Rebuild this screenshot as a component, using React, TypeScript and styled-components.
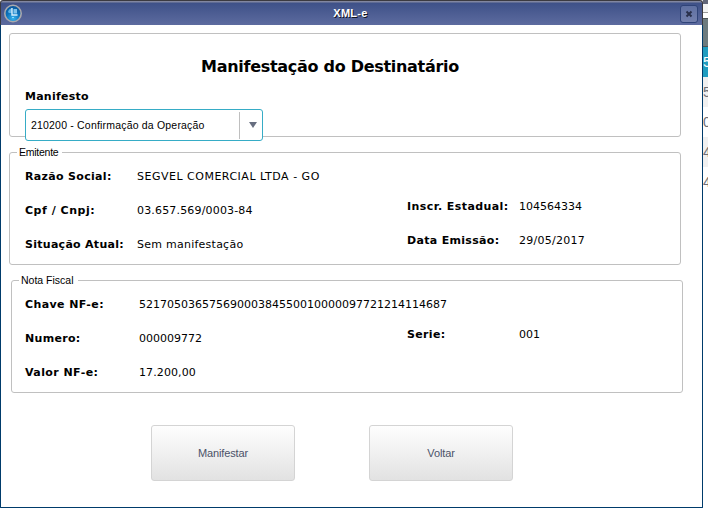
import React from "react";
import styled, { createGlobalStyle } from "styled-components";

const Global = createGlobalStyle`
  *, *::before, *::after { box-sizing: border-box; }
  html, body { margin: 0; padding: 0; background: #fff; overflow: hidden; }
`;

const Desktop = styled.div`
  display: flex;
  width: 708px;
  height: 511px;
  overflow: hidden;
  background: #fff;
  font-family: "DejaVu Sans", Verdana, sans-serif;
  font-size: 11px;
  color: #000;
`;

const Dialog = styled.main`
  width: 703px;
  height: 508px;
  flex: none;
  display: flex;
  flex-direction: column;
  border-radius: 3px 3px 1px 1px;
`;

const TitleBar = styled.header`
  height: 25px;
  flex: none;
  display: grid;
  grid-template-columns: 24px 1fr 24px;
  align-items: center;
  padding: 0 4px 0 2px;
  border: 1px solid #3b3a40;
  border-bottom: 0;
  border-radius: 3px 3px 0 0;
  background: linear-gradient(#8186a0 0 1px, #3e5188 2px, #5d6b9f 100%);
`;

const Caption = styled.h1`
  margin: 0;
  font: bold 11px/14px "Liberation Sans", Arial, sans-serif;
  letter-spacing: 0.3px;
  text-align: center;
  color: #fff;
  text-shadow: 1px 1px 0 #10131f;
`;

const CloseButton = styled.button`
  width: 18px;
  height: 18px;
  margin: 1px 0 0 6px;
  padding: 0;
  display: grid;
  place-items: center;
  border: 1px solid #2f4378;
  border-radius: 3px;
  background: linear-gradient(#5f70a2, #7380ad);
`;

const Content = styled.div`
  flex: 1;
  padding: 8px 0 0 8px;
  border: 1px solid #003b6b;
  border-top: 0;
  border-radius: 0 0 1px 1px;
  background: #fff;
`;

const Panel = styled.section<{ $gap?: number; $indent?: number; $height: number }>`
  position: relative;
  width: 672px;
  height: ${(p) => p.$height}px;
  margin: ${(p) => p.$gap ?? 0}px 0 0 ${(p) => p.$indent ?? 0}px;
  border: 1px solid #c0c0c0;
  border-radius: 3px;
`;

const Legend = styled.h3<{ $spacing: number }>`
  position: absolute;
  left: 7px;
  top: -8px;
  margin: 0;
  padding: 0 4px 0 2px;
  background: #fff;
  font: 10.5px/14px "Liberation Sans", Arial, sans-serif;
  letter-spacing: ${(p) => p.$spacing}px;
`;

const Heading = styled.h2`
  margin: 0;
  padding: 22px 0 0 0;
  text-align: center;
  font-size: 16px;
  line-height: 22px;
  letter-spacing: -0.29px;
  white-space: nowrap;
  transform: translateX(-15px);
`;

const FieldLabel = styled.label`
  display: block;
  padding: 12px 0 0 15px;
  font-weight: bold;
  line-height: 14px;
  letter-spacing: 0.25px;
`;

const Select = styled.div`
  width: 238px;
  height: 32px;
  margin: 5px 0 0 15px;
  display: flex;
  align-items: center;
  border: 1px solid #36acc6;
  border-radius: 3px;
  background: #fff;
  font: 10.5px/14px "Liberation Sans", Arial, sans-serif;
`;

const SelectValue = styled.span`
  flex: 1;
  padding-left: 5px;
  letter-spacing: 0.19px;
  white-space: nowrap;
`;

const SelectArrow = styled.span`
  width: 23px;
  height: 27px;
  padding-left: 3px;
  display: grid;
  place-items: center;
  border-left: 1px solid #bfbfbf;
`;

const Columns = styled.div`
  display: flex;
  padding-top: 17px;
`;

const Column = styled.dl<{ $left: number; $width: number; $drop?: number }>`
  width: ${(p) => p.$width}px;
  margin: 0;
  padding: ${(p) => p.$drop ?? 0}px 0 0 ${(p) => p.$left}px;
  white-space: nowrap;
`;

const Row = styled.div<{ $label: number }>`
  height: 34px;
  display: grid;
  grid-template-columns: ${(p) => p.$label}px 1fr;
  line-height: 14px;
`;

const Term = styled.dt<{ $spacing: number }>`
  font-weight: bold;
  letter-spacing: ${(p) => p.$spacing}px;
`;

const Value = styled.dd<{ $spacing: number }>`
  margin: 0;
  letter-spacing: ${(p) => p.$spacing}px;
`;

const Actions = styled.footer`
  display: flex;
  gap: 74px;
  padding: 32px 0 0 142px;
`;

const ActionButton = styled.button`
  width: 144px;
  height: 56px;
  padding: 0;
  border: 1px solid #d4d4d4;
  border-radius: 3px;
  background: linear-gradient(#fefefe, #e2e2e2);
  color: #4b5268;
  font: 11px/14px "Liberation Sans", Arial, sans-serif;
  letter-spacing: -0.12px;
`;

const Backdrop = styled.aside`
  width: 5px;
  flex: none;
  overflow: hidden;
  display: flex;
  flex-direction: column;
  font: 14px/30px "Liberation Sans", Arial, sans-serif;
`;

const BackdropBar = styled.div`
  height: 18px;
  flex: none;
  background: linear-gradient(#626779 0 4px, #f3f3f3 4px 12px, #999 12px 13px, #fff 13px);
`;

const BackdropHead = styled.div`
  height: 29px;
  flex: none;
  border: solid #4c5355;
  border-width: 1px 0;
  background: #6d7b7e;
`;

const BackdropRow = styled.div<{ $bg: string; $color?: string }>`
  height: 30px;
  flex: none;
  background: ${(p) => p.$bg};
  color: ${(p) => p.$color ?? "#707078"};
`;

const AppIcon = () => (
  <svg width="20" height="20" viewBox="0 0 20 20">
    <defs>
      <radialGradient id="globe" cx="50%" cy="80%" r="80%">
        <stop offset="0" stopColor="#35b3ee" />
        <stop offset="0.5" stopColor="#0c74bd" />
        <stop offset="1" stopColor="#0a5396" />
      </radialGradient>
    </defs>
    <circle cx="10" cy="10.5" r="8.2" fill="url(#globe)" stroke="#a9a9ad" strokeWidth="1.6" />
    <path d="M5 9Q5.5 6 9 5V10H6Z" fill="#5fb2e4" />
    <path d="M9 5V12H14.5" fill="none" stroke="#d4edfb" strokeWidth="1.4" />
    <path d="M10.5 6H14V10.5H10.5Z" fill="#7fc2ea" />
    <path d="M9 14.5H11" stroke="#8edbff" />
  </svg>
);

interface Field {
  term: string;
  value: string;
  termSpacing: number;
  valueSpacing: number;
}

const issuerLeft: Field[] = [
  { term: "Razão Social:", value: "SEGVEL COMERCIAL LTDA - GO", termSpacing: 0.32, valueSpacing: 0.5 },
  { term: "Cpf / Cnpj:", value: "03.657.569/0003-84", termSpacing: 0.53, valueSpacing: 0.17 },
  { term: "Situação Atual:", value: "Sem manifestação", termSpacing: 0.28, valueSpacing: 0.25 },
];
const issuerRight: Field[] = [
  { term: "Inscr. Estadual:", value: "104564334", termSpacing: 0.42, valueSpacing: 0 },
  { term: "Data Emissão:", value: "29/05/2017", termSpacing: 0.32, valueSpacing: 0.25 },
];
const invoiceLeft: Field[] = [
  { term: "Chave NF-e:", value: "52170503657569000384550010000097721214114687", termSpacing: 0.4, valueSpacing: 0 },
  { term: "Numero:", value: "000009772", termSpacing: 0.3, valueSpacing: 0 },
  { term: "Valor NF-e:", value: "17.200,00", termSpacing: 0.42, valueSpacing: 0.1 },
];
const invoiceRight: Field[] = [{ term: "Serie:", value: "001", termSpacing: 0.35, valueSpacing: 0 }];

const Rows = ({ items, label }: { items: Field[]; label: number }) => (
  <>
    {items.map((f) => (
      <Row key={f.term} $label={label}>
        <Term $spacing={f.termSpacing}>{f.term}</Term>
        <Value $spacing={f.valueSpacing}>{f.value}</Value>
      </Row>
    ))}
  </>
);

export default function App() {
  return (
    <>
      <Global />
      <Desktop>
        <Dialog>
          <TitleBar>
            <AppIcon />
            <Caption>XML-e</Caption>
            <CloseButton aria-label="Fechar">
              <svg width="8" height="8" viewBox="0 0 8 8">
                <path d="M1.5 1.5L6.5 6.5M6.5 1.5L1.5 6.5" stroke="#29304b" strokeWidth="2" />
              </svg>
            </CloseButton>
          </TitleBar>
          <Content>
            <Panel $height={104}>
              <Heading>Manifestação do Destinatário</Heading>
              <FieldLabel>Manifesto</FieldLabel>
              <Select>
                <SelectValue>210200 - Confirmação da Operação</SelectValue>
                <SelectArrow>
                  <svg width="8" height="6" viewBox="0 0 8 6">
                    <path d="M0 0H8L4 6Z" fill="#676e80" />
                  </svg>
                </SelectArrow>
              </Select>
            </Panel>
            <Panel $height={113} $gap={15}>
              <Legend $spacing={-0.25}>Emitente</Legend>
              <Columns>
                <Column $left={15} $width={397}>
                  <Rows items={issuerLeft} label={112} />
                </Column>
                <Column $left={0} $width={250} $drop={30}>
                  <Rows items={issuerRight} label={112} />
                </Column>
              </Columns>
            </Panel>
            <Panel $height={113} $gap={15} $indent={2}>
              <Legend $spacing={0}>Nota Fiscal</Legend>
              <Columns>
                <Column $left={13} $width={395}>
                  <Rows items={invoiceLeft} label={114} />
                </Column>
                <Column $left={0} $width={250} $drop={30}>
                  <Rows items={invoiceRight} label={112} />
                </Column>
              </Columns>
            </Panel>
            <Actions>
              <ActionButton>Manifestar</ActionButton>
              <ActionButton>Voltar</ActionButton>
            </Actions>
          </Content>
        </Dialog>
        <Backdrop>
          <BackdropBar />
          <BackdropHead />
          <BackdropRow $bg="#1f9dc0" $color="#fff">5</BackdropRow>
          <BackdropRow $bg="#f0f0f0">5</BackdropRow>
          <BackdropRow $bg="#fff">0</BackdropRow>
          <BackdropRow $bg="#f0f0f0">4</BackdropRow>
          <BackdropRow $bg="#fff">4</BackdropRow>
        </Backdrop>
      </Desktop>
    </>
  );
}
